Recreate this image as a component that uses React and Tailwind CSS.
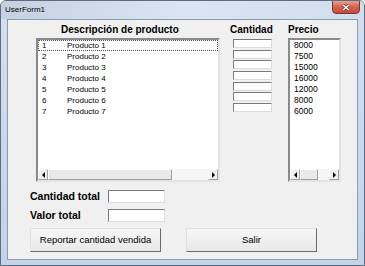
import React from 'react';

const rows = [
  { n: '1', name: 'Producto 1', price: '8000' },
  { n: '2', name: 'Producto 2', price: '7500' },
  { n: '3', name: 'Producto 3', price: '15000' },
  { n: '4', name: 'Producto 4', price: '16000' },
  { n: '5', name: 'Producto 5', price: '12000' },
  { n: '6', name: 'Producto 6', price: '8000' },
  { n: '7', name: 'Producto 7', price: '6000' },
];

const Arrow = ({ dir }) => (
  <div className="w-[10px] h-full flex items-center justify-center bg-[#f0f0f0] border border-t-white border-l-white border-r-[#a0a0a0] border-b-[#a0a0a0]">
    {dir === 'left' ? (
      <div className="w-0 h-0 border-y-[3px] border-y-transparent border-r-[3px] border-r-black" />
    ) : (
      <div className="w-0 h-0 border-y-[3px] border-y-transparent border-l-[3px] border-l-black" />
    )}
  </div>
);

const ScrollBar = ({ thumb }) => (
  <div className="h-[11px] flex shrink-0">
    <Arrow dir="left" />
    <div className={`${thumb} h-full bg-[#e9e9e9] border border-t-white border-l-white border-r-[#a0a0a0] border-b-[#a0a0a0]`} />
    <div className="flex-1 h-full bg-[#f6f6f6]" />
    <Arrow dir="right" />
  </div>
);

const ListBox = ({ children, thumb, className }) => (
  <div className={`${className} h-[144px] bg-white border-2 border-t-[#8a8a8a] border-l-[#8a8a8a] border-r-[#e3e3e3] border-b-[#e3e3e3] flex flex-col`}>
    <div className="flex-1 flex flex-col">{children}</div>
    <ScrollBar thumb={thumb} />
  </div>
);

const TextBox = ({ className }) => (
  <div className={`${className} bg-white border border-t-[#7a7a7a] border-l-[#7a7a7a] border-r-[#dcdcdc] border-b-[#dcdcdc]`} />
);

const Button = ({ children }) => (
  <button className="w-[131px] h-[24px] bg-gradient-to-b from-[#f7f7f7] to-[#e8e8e8] border border-t-[#e0e0e0] border-l-[#e0e0e0] border-r-[#6a6a6a] border-b-[#6a6a6a] text-[9.5px] leading-[12px] text-black">
    {children}
  </button>
);

export default function App() {
  return (
    <div className="w-[365px] h-[266px] flex flex-col rounded-t-[6px] border border-[#5d6e84] bg-gradient-to-b from-[#d3dfed] to-[#c3d4e8] font-['Liberation_Sans',Arial,sans-serif] overflow-hidden">
      <div className="h-[18px] flex items-start shrink-0 bg-gradient-to-r from-[#c4d1e1] via-[#dbe5f1] to-[#d2deec]">
        <span className="pl-[4px] pt-[4px] text-[8px] leading-[10px] text-black">UserForm1</span>
        <div className="ml-auto mr-[4px] -mt-px w-[28px] h-[14px] rounded-b-[4px] border border-[#7a3a30] bg-gradient-to-b from-[#e6a291] via-[#d4624f] to-[#c9493a] flex items-center justify-center">
          <svg width="8" height="7" viewBox="0 0 8 7">
            <path d="M1 1 L7 6 M7 1 L1 6" stroke="#5a1a12" strokeWidth="2.6" />
            <path d="M1 1 L7 6 M7 1 L1 6" stroke="#ffffff" strokeWidth="1.6" />
          </svg>
        </div>
      </div>

      <div className="mx-[6px] mb-[5px] h-[241px] bg-[#f0f0f0] border border-[#8a9cb2] flex flex-col">
        <div className="flex pt-[4px] pl-[28px]">
          <div className="w-[184px] flex flex-col">
            <div className="h-[14px] pl-[25px] text-[10px] font-bold leading-[12px]">Descripción de producto</div>
            <ListBox thumb="w-[124px]" className="w-[184px]">
              {rows.map((r, i) => (
                <div
                  key={r.n}
                  className={`h-[11px] flex items-center text-[8px] leading-[11px] ${i === 0 ? 'border border-dotted border-[#555]' : 'border border-transparent'}`}
                >
                  <span className="w-[28px] pl-[3px]">{r.n}</span>
                  <span>{r.name}</span>
                </div>
              ))}
            </ListBox>
          </div>

          <div className="ml-[10px] w-[44px] flex flex-col">
            <div className="h-[14px] text-[10px] font-bold leading-[12px]">Cantidad</div>
            <div className="mt-[1px] ml-[3px] flex flex-col gap-[1.67px]">
              {rows.map((r) => (
                <TextBox key={r.n} className="w-[39px] h-[9px]" />
              ))}
            </div>
          </div>

          <div className="ml-[14px] w-[53px] flex flex-col">
            <div className="h-[14px] text-[10px] font-bold leading-[12px]">Precio</div>
            <ListBox thumb="w-[18px]" className="w-[53px]">
              {rows.map((r) => (
                <div key={r.n} className="h-[11px] pl-[3px] border border-transparent text-[8.5px] leading-[9px]">
                  {r.price}
                </div>
              ))}
            </ListBox>
          </div>
        </div>

        <div className="mt-[8px] pl-[22px] h-[13px] flex items-center">
          <span className="w-[78px] text-[10.5px] font-bold leading-[13px]">Cantidad total</span>
          <TextBox className="w-[57px] h-[13px]" />
        </div>
        <div className="mt-[6px] pl-[22px] h-[13px] flex items-center">
          <span className="w-[78px] text-[10.5px] font-bold leading-[13px]">Valor total</span>
          <TextBox className="w-[57px] h-[13px]" />
        </div>

        <div className="mt-[6px] pl-[22px] flex gap-[25px]">
          <Button>Reportar cantidad vendida</Button>
          <Button>Salir</Button>
        </div>
      </div>
    </div>
  );
}
